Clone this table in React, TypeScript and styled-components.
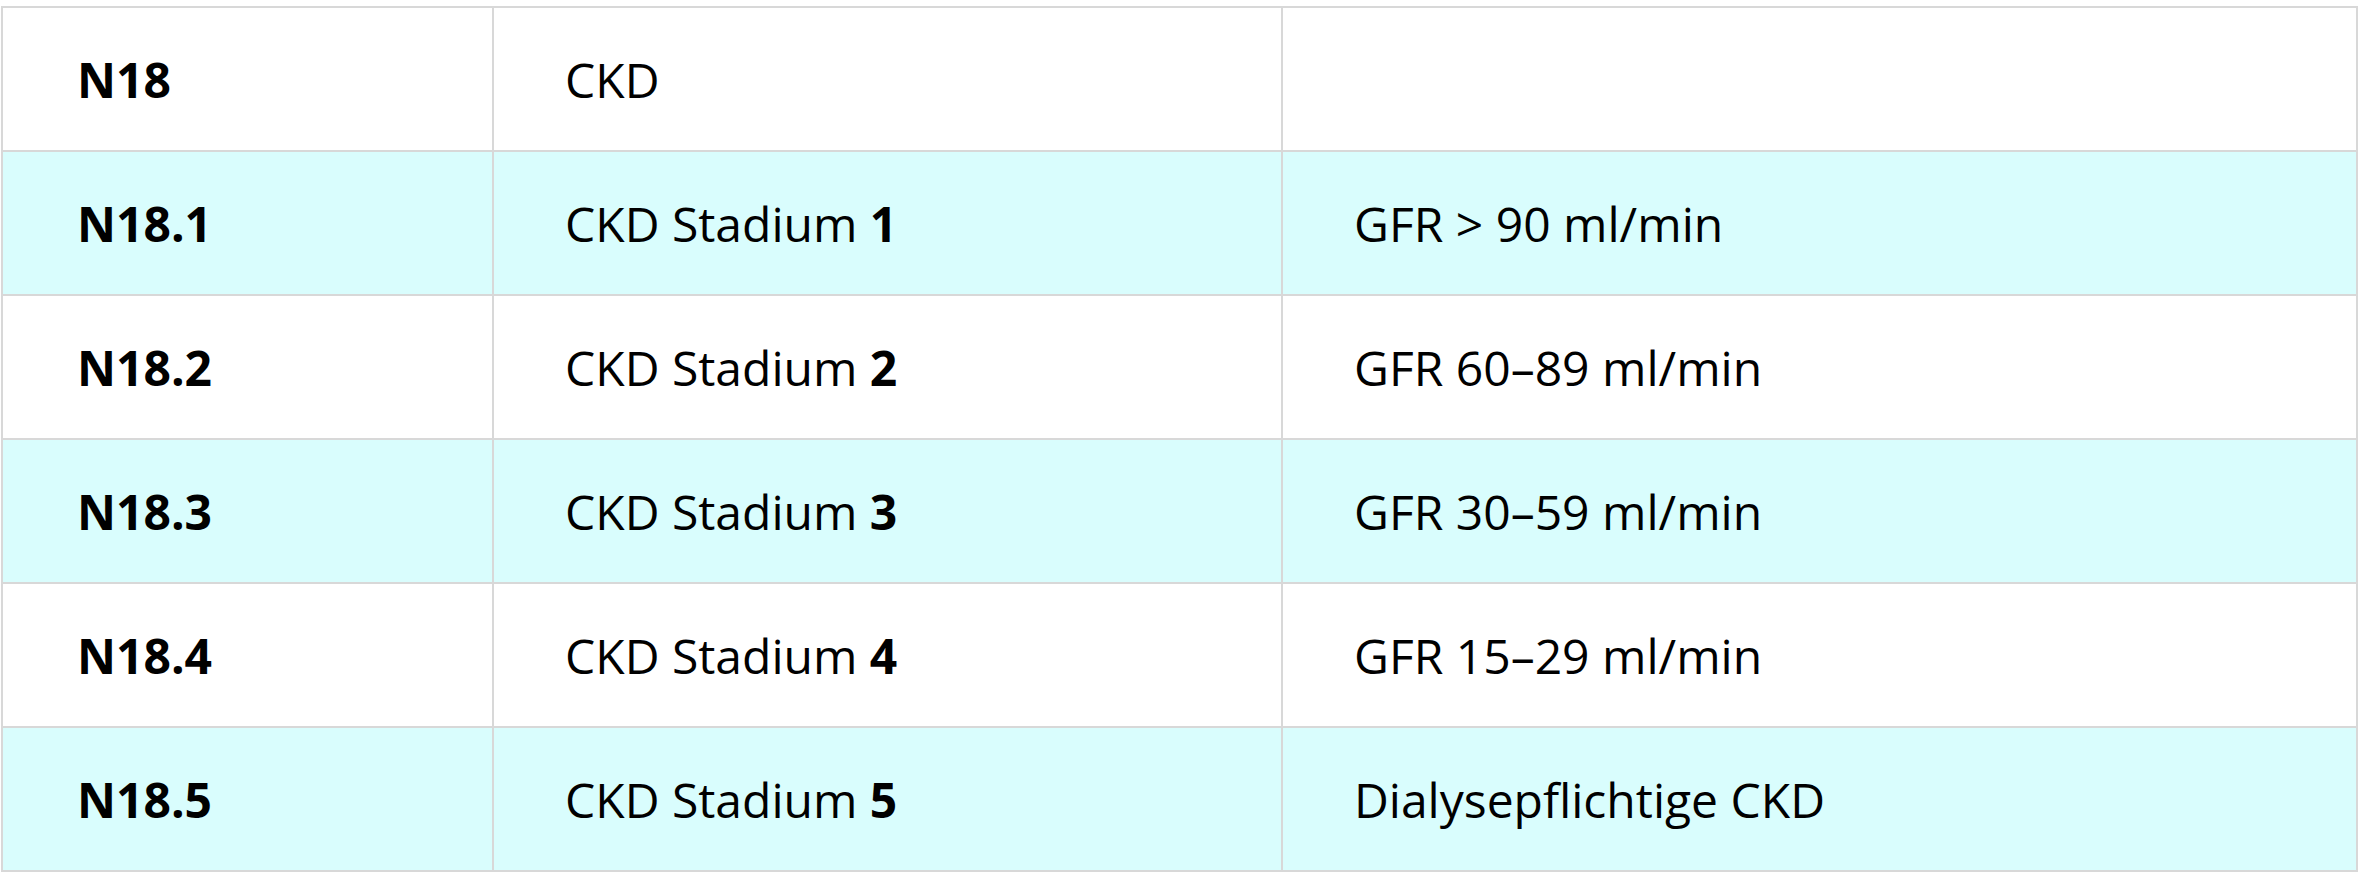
import React from "react";
import styled, { createGlobalStyle } from "styled-components";

const GlobalStyle = createGlobalStyle`
  html, body {
    margin: 0;
    padding: 0;
    background: #ffffff;
  }
  body {
    font-family: "Open Sans", "Noto Sans", "Liberation Sans", sans-serif;
    color: #000000;
  }
`;

const Page = styled.div`
  padding: 6px 3px 0 1px;
`;

const Table = styled.table`
  width: 2357px;
  border-collapse: collapse;
  table-layout: fixed;
  border: 2px solid #d8d8d8;
`;

const Row = styled.tr<{ $alt: boolean }>`
  background: ${(p) => (p.$alt ? "#d9fdfd" : "#ffffff")};
`;

const Cell = styled.td<{ $code?: boolean }>`
  height: 144px;
  box-sizing: border-box;
  padding: 0 0 0 ${(p) => (p.$code ? 74 : 71)}px;
  border: 2px solid #d8d8d8;
  font-size: 48px;
  line-height: 65px;
  font-weight: ${(p) => (p.$code ? 700 : 400)};
  vertical-align: middle;
  white-space: nowrap;
`;

const Strong = styled.b`
  font-weight: 700;
`;

type Item = { code: string; stage?: string; desc: string };

const rows: Item[] = [
  { code: "N18", desc: "" },
  { code: "N18.1", stage: "1", desc: "GFR > 90 ml/min" },
  { code: "N18.2", stage: "2", desc: "GFR 60–89 ml/min" },
  { code: "N18.3", stage: "3", desc: "GFR 30–59 ml/min" },
  { code: "N18.4", stage: "4", desc: "GFR 15–29 ml/min" },
  { code: "N18.5", stage: "5", desc: "Dialysepflichtige CKD" },
];

export default function App() {
  return (
    <>
      <GlobalStyle />
      <Page>
        <Table>
          <colgroup>
            <col style={{ width: 491 }} />
            <col style={{ width: 789 }} />
            <col />
          </colgroup>
          <tbody>
            {rows.map((r, i) => (
              <Row key={r.code} $alt={i % 2 === 1}>
                <Cell $code>{r.code}</Cell>
                <Cell>
                  {r.stage ? (
                    <>
                      CKD Stadium <Strong>{r.stage}</Strong>
                    </>
                  ) : (
                    "CKD"
                  )}
                </Cell>
                <Cell>{r.desc}</Cell>
              </Row>
            ))}
          </tbody>
        </Table>
      </Page>
    </>
  );
}
